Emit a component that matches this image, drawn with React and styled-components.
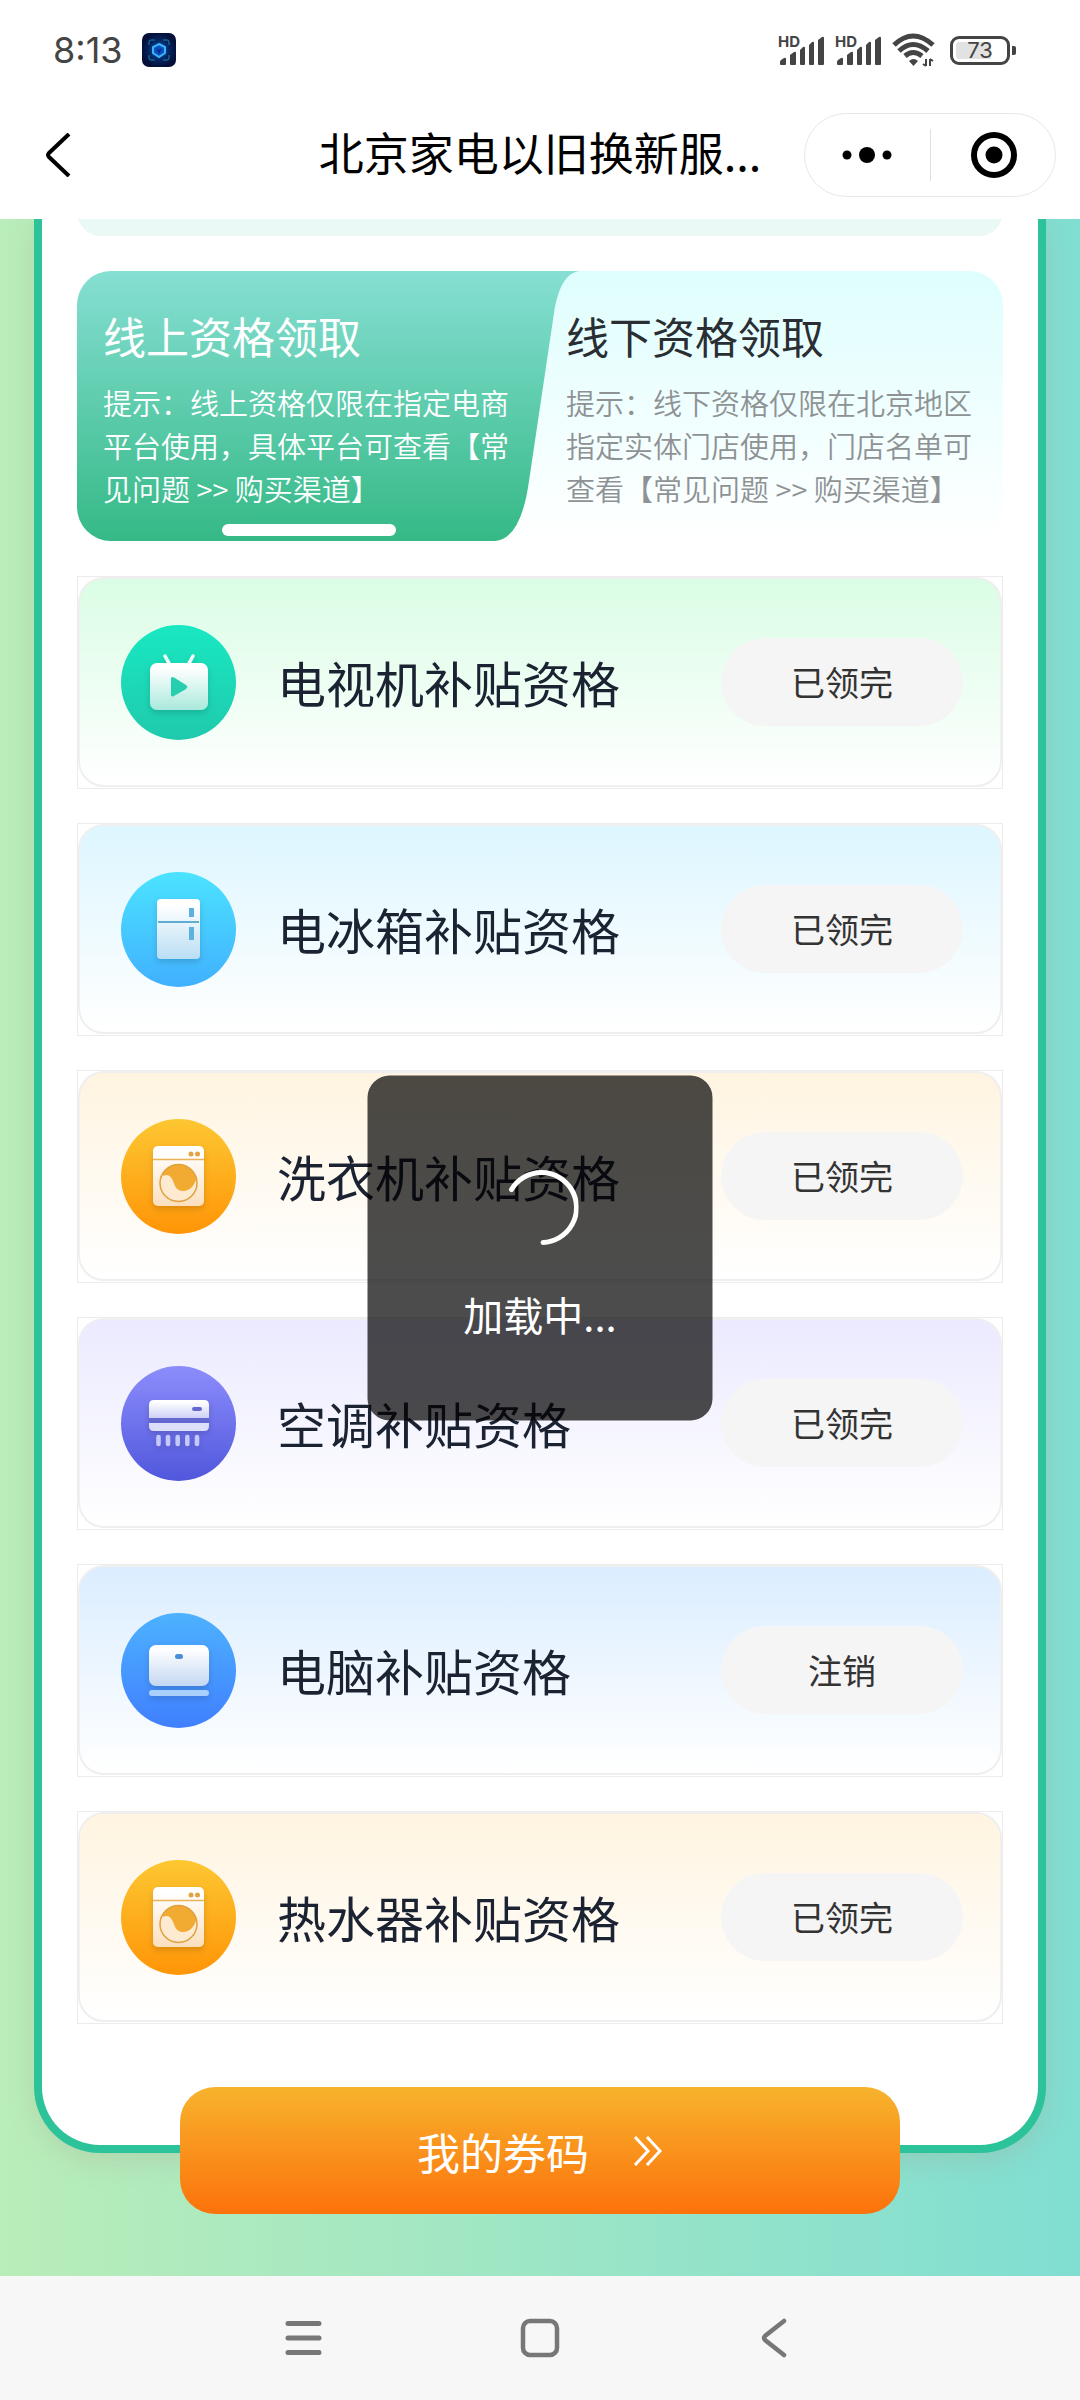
import React from 'react'
import styled, { createGlobalStyle } from 'styled-components'

const GlobalStyle = createGlobalStyle`
* {
  box-sizing: border-box;
}
body {
  margin: 0;
  background-color: #fff;
  font-family: "Noto Sans CJK SC", "Noto Sans", sans-serif;
}
button {
  font-family: inherit;
  border: none;
  padding: 0;
  background: none;
  cursor: pointer;
}
svg {
  display: block;
}
`

const Page = styled.div`
min-height: 100vh;
display: flex;
flex-direction: column;
`

const StatusBar = styled.div`
height: 90px;
padding: 10px 64px 0 53px;
display: flex;
align-items: center;
justify-content: space-between;
color: #444;
`

const StatusGroup = styled.div`
display: flex;
align-items: center;
gap: ${props => props.$gap}px;
`

const Clock = styled.span`
font-family: Inter, sans-serif;
font-size: 36px;
line-height: 40px;
`

const Battery = styled.div`
display: flex;
align-items: center;
gap: 2px;
margin-left: 4px;
`

const BatteryBody = styled.div`
width: 60px;
height: 29px;
border: 3px solid #444;
border-radius: 9px;
padding: 3px;
`

const BatteryLevel = styled.div`
height: 100%;
border-radius: 3px;
background: linear-gradient(to right, #e2e2e2 ${props => props.$level}%, transparent ${props => props.$level}%);
display: flex;
align-items: center;
justify-content: center;
font-family: Inter, sans-serif;
font-size: 22px;
line-height: 22px;
`

const BatteryTip = styled.div`
width: 4px;
height: 9px;
border-radius: 0 2px 2px 0;
background-color: #444;
`

const Header = styled.header`
height: 129px;
padding: 0 24px;
display: grid;
grid-template-columns: 1fr auto 1fr;
align-items: center;
`

const Title = styled.h1`
margin: 0 0 5px;
font-size: 45px;
line-height: 64px;
font-weight: 400;
color: #000;
white-space: nowrap;
`

const BackButton = styled.button`
width: 72px;
height: 64px;
display: flex;
align-items: center;
justify-content: center;
`

const Capsule = styled.div`
justify-self: end;
width: 252px;
height: 84px;
border: 1px solid #e8e8e8;
border-radius: 42px;
display: flex;
align-items: center;
`

const CapsuleButton = styled.button`
flex: 1;
height: 52px;
display: flex;
align-items: center;
justify-content: center;
& + & {
  border-left: 1px solid #e0e0e0;
}
`

const Main = styled.main`
flex: 1;
position: relative;
overflow: hidden;
padding: 0 34px 62px;
background: linear-gradient(to right, #b9edb9, #80ded2);
`

const Panel = styled.section`
background-color: #fff;
border: 8px solid #2cc39b;
border-top: none;
border-radius: 0 0 66px 66px;
box-shadow: 0 8px 26px rgba(170, 150, 130, 0.25);
padding: 0 35px 121px;
display: flex;
flex-direction: column;
gap: 35px;
`

// only the lower edge of the notice is in view, the rest is scrolled off
const Notice = styled.div`
height: 57px;
margin-top: -40px;
border-radius: 24px;
background-color: #eaf9f6;
`

const Tabs = styled.div`
height: 270px;
display: grid;
grid-template-columns: 1fr 1fr;
border-radius: 34px;
background: linear-gradient(to bottom, #dffefe, #fff);
`

const Tab = styled.button`
position: relative;
padding: 32px 26px 5px;
display: flex;
flex-direction: column;
align-items: flex-start;
text-align: left;
color: ${props => props.$active ? '#fff' : '#2a2e33'};
`

const TabShape = styled.span`
position: absolute;
inset: 0 -41px 0 0;
display: flex;
`

const TabFill = styled.span`
flex: 1;
border-radius: 34px 0 0 34px;
background: linear-gradient(to bottom, #86dfd3, #35b986);
`

const TabName = styled.span`
position: relative;
font-size: 43px;
line-height: 64px;
`

const TabHint = styled.span`
position: relative;
margin-top: 14px;
font-size: 29px;
line-height: 43px;
font-weight: 350;
color: ${props => props.$active ? '#fff' : '#8f9294'};
`

const TabBar = styled.span`
position: relative;
align-self: center;
width: 174px;
height: 12px;
margin-top: auto;
border-radius: 6px;
background-color: #fff;
`

const List = styled.ul`
margin: 0;
padding: 0;
list-style: none;
display: flex;
flex-direction: column;
gap: 34px;
`

const Item = styled.li`
height: 213px;
border: 1px solid #ececec;
padding-bottom: 1px;
`

const ItemInner = styled.div`
height: 100%;
border: 2px solid #efefef;
border-radius: 26px;
background: linear-gradient(to bottom, ${props => props.$color}, #fff);
padding: 0 37px 0 41px;
display: flex;
align-items: center;
`

const ItemName = styled.h2`
flex: 1;
margin: 0 0 0 41px;
font-size: 49px;
line-height: 72px;
font-weight: 400;
color: #1b2333;
`

const ItemButton = styled.button`
width: 242px;
height: 88px;
border-radius: 44px;
background-color: #f5f5f5;
color: #333;
font-size: 34px;
line-height: 48px;
`

const CouponButton = styled.button`
position: relative;
width: calc(100% - 292px);
height: 127px;
margin: -66px auto 0;
border-radius: 35px;
background: linear-gradient(to bottom, #f7b32d, #fc720b);
color: #fff;
font-size: 43px;
line-height: 64px;
display: flex;
align-items: center;
justify-content: center;
gap: 44px;
`

const Toast = styled.div`
position: absolute;
top: 50%;
left: 50%;
transform: translate(-50%, -50%);
width: 345px;
height: 345px;
border-radius: 22px;
background-color: rgba(0, 0, 0, 0.7);
color: #fff;
font-size: 40px;
line-height: 60px;
display: flex;
flex-direction: column;
align-items: center;
justify-content: center;
gap: 38px;
padding-top: 18px;
`

const NavBar = styled.nav`
height: 124px;
background-color: #f7f7f7;
display: flex;
align-items: center;
justify-content: center;
gap: 196px;
`

const NavButton = styled.button`
width: 40px;
height: 40px;
`

const AppBadge = () => (
  <svg width="34" height="34" viewBox="0 0 34 34">
    <defs>
      <radialGradient id="badge">
        <stop offset="0" stopColor="#0b5fc4" />
        <stop offset="0.6" stopColor="#04245f" />
        <stop offset="1" stopColor="#03103a" />
      </radialGradient>
    </defs>
    <rect width="34" height="34" rx="7" fill="url(#badge)" />
    <path d="M7 12V9q0-2 2-2h4M21 7h4q2 0 2 2v3M27 22v3q0 2-2 2h-4M13 27H9q-2 0-2-2v-3" fill="none" stroke="#1b7fa8" strokeWidth="1" />
    <path d="M17 11l6 3v6l-6 4-6-4v-6z" fill="#0a4fc0" stroke="#3fb4f5" strokeWidth="2" />
    <path d="M14 15l3 2 3-2-3 6z" fill="#062a80" />
  </svg>
)

const Signal = () => (
  <svg width="47" height="34" viewBox="0 0 47 34" fill="#444">
    <text x="0" y="14" fontFamily="Inter, sans-serif" fontSize="15" fontWeight="700">HD</text>
    <path d="M2 31v-2q0-1 1-2l3-2q2-1 2 1v5q0 1-1 1H3q-1 0-1-1z" />
    <path d="M12 31v-9l4-3q2-1 2 1v11q0 1-1 1h-4q-1 0-1-1z" />
    <path d="M22 31V17l3-3q2-1 2 1v16q0 1-1 1h-3q-1 0-1-1z" />
    <path d="M31 31V12l3-3q2-1 2 1v21q0 1-1 1h-3q-1 0-1-1z" />
    <path d="M40 31V7l4-3q2-1 2 1v26q0 1-1 1h-4q-1 0-1-1z" />
  </svg>
)

const Wifi = () => (
  <svg width="44" height="34" viewBox="0 0 44 34" fill="none" stroke="#444">
    <path d="M2 12Q21-6 41 12" strokeWidth="5" />
    <path d="M7 18Q21 5 36 18" strokeWidth="5" />
    <path d="M13 23Q21 16 30 23" strokeWidth="5" />
    <path d="M17 28q4.500-4 9 0l-4.500 5z" fill="#444" stroke="none" />
    <path d="M34 26v7M31 31l3 2M38 33v-7M41 28l-3-2" strokeWidth="2" />
  </svg>
)

const ICON_COLORS = {
  tv: ['#19e8c2', '#1fcaac', '#a9e9dc'],
  fridge: ['#4be3ff', '#41b0ff', '#b9def3'],
  washer: ['#fdc732', '#ff9507', '#fbdfbd'],
  ac: ['#8c8dfc', '#5057dc', '#cdd0f5'],
  pc: ['#4db2ff', '#407fff', '#c3d7f3'],
}

const shapes = {
  tv: fill => (
    <>
      <path d="M44 31l5 9M72 31l-5 9" stroke="#f2fffc" strokeWidth="3.500" strokeLinecap="round" />
      <rect x="29" y="38" width="58" height="47" rx="7" fill={fill} />
      <path d="M50 54q0-3 3-1.500l12 7.500q2.500 2 0 4l-12 7q-3 1.500-3-1.500z" fill="#25cdae" />
    </>
  ),
  fridge: fill => (
    <>
      <rect x="36" y="27" width="43" height="60" rx="4" fill={fill} />
      <path d="M37 50h41" stroke="#5fadd0" strokeWidth="2" />
      <path d="M68 36h5v9h-5zM68 55h5v13h-5z" fill="#5fb1dd" />
    </>
  ),
  washer: fill => (
    <>
      <rect x="32" y="27" width="51" height="60" rx="5" fill={fill} />
      <path d="M32 40.500h51" stroke="#eab457" strokeWidth="1.500" />
      <circle cx="70" cy="35" r="2.500" fill="#dfa544" />
      <circle cx="76.500" cy="35" r="2.500" fill="#dfa544" />
      <circle cx="57.500" cy="64" r="18.500" fill="#fdead1" />
      <path d="M42 54A18.500 18.500 0 0 1 75.500 59.500C73 67 69 72 62 72 54 72 54 65 51 60 49 56.500 46 55 42 57z" fill="#f1ab30" />
      <circle cx="57.500" cy="64" r="18.500" fill="none" stroke="#dfa03c" strokeWidth="1.500" />
    </>
  ),
  ac: fill => (
    <>
      <path d="M28 39q0-5 5-5h50q5 0 5 5v13H28z" fill={fill} />
      <path d="M28 52h60v5H28z" fill="#6468cf" />
      <path d="M28 57h60v3q0 5-5 5H33q-5 0-5-5z" fill="#dcdff9" />
      <rect x="71" y="41" width="10" height="4" rx="2" fill="#6468cf" />
      <path d="M37.500 71v7M47 71v7M56.700 71v7M66.300 71v7M76 71v7" stroke="#c5c9fa" strokeWidth="4.500" strokeLinecap="round" />
    </>
  ),
  pc: fill => (
    <>
      <rect x="28" y="32" width="60" height="41" rx="7" fill={fill} />
      <rect x="54" y="41" width="8" height="5" rx="2.500" fill="#4a8fd6" />
      <rect x="28" y="77" width="60" height="6" rx="3" fill="#a9cffc" />
    </>
  ),
}

const DeviceIcon = ({ type, id }) => {
  const [top, bottom, shade] = ICON_COLORS[type]
  return (
    <svg width="115" height="115" viewBox="0 0 115 115" fill="none" aria-hidden="true">
      <defs>
        <linearGradient id={`bg-${id}`} x1="0" y1="0" x2="0" y2="1">
          <stop offset="0" stopColor={top} />
          <stop offset="1" stopColor={bottom} />
        </linearGradient>
        <linearGradient id={`body-${id}`} x1="0" y1="0" x2="0" y2="1">
          <stop offset="0.100" stopColor="#fff" />
          <stop offset="1" stopColor={shade} />
        </linearGradient>
        <filter id={`shadow-${id}`} x="-20%" y="-20%" width="140%" height="150%">
          <feDropShadow dx="0" dy="3" stdDeviation="3" floodColor="#000" floodOpacity="0.150" />
        </filter>
      </defs>
      <circle cx="57.500" cy="57.500" r="57.500" fill={`url(#bg-${id})`} />
      <g filter={`url(#shadow-${id})`}>{shapes[type](`url(#body-${id})`)}</g>
    </svg>
  )
}

const TabEdge = () => (
  <svg width="86" height="100%" viewBox="0 0 86 270" preserveAspectRatio="none">
    <defs>
      <linearGradient id="tab-edge" x1="0" y1="0" x2="0" y2="1">
        <stop offset="0" stopColor="#86dfd3" />
        <stop offset="1" stopColor="#35b986" />
      </linearGradient>
    </defs>
    <path d="M0 0H86C70 1 63 18 59 42L34 210Q26 268 0 270z" fill="url(#tab-edge)" />
  </svg>
)

const items = [
  { name: '电视机补贴资格', icon: 'tv', color: '#dafde5', status: '已领完' },
  { name: '电冰箱补贴资格', icon: 'fridge', color: '#ddf6ff', status: '已领完' },
  { name: '洗衣机补贴资格', icon: 'washer', color: '#fff4e0', status: '已领完' },
  { name: '空调补贴资格', icon: 'ac', color: '#ebeaff', status: '已领完' },
  { name: '电脑补贴资格', icon: 'pc', color: '#dbedff', status: '注销' },
  { name: '热水器补贴资格', icon: 'washer', color: '#fff4e0', status: '已领完' },
]

const App = () => {
  return (
    <Page>
      <GlobalStyle />
      <StatusBar>
        <StatusGroup $gap={19}>
          <Clock>8:13</Clock>
          <AppBadge />
        </StatusGroup>
        <StatusGroup $gap={10}>
          <Signal />
          <Signal />
          <Wifi />
          <Battery>
            <BatteryBody>
              <BatteryLevel $level={73}>73</BatteryLevel>
            </BatteryBody>
            <BatteryTip />
          </Battery>
        </StatusGroup>
      </StatusBar>

      <Header>
        <BackButton aria-label="返回">
          <svg width="36" height="44" viewBox="0 0 36 44" fill="none" stroke="#000" strokeWidth="4">
            <path d="M27 1L7 20q-2 2 0 4l20 19" />
          </svg>
        </BackButton>
        <Title>北京家电以旧换新服...</Title>
        <Capsule>
          <CapsuleButton aria-label="更多">
            <svg width="50" height="18" viewBox="0 0 50 18">
              <circle cx="5" cy="9" r="4.500" />
              <circle cx="25" cy="9" r="8" />
              <circle cx="45" cy="9" r="4.500" />
            </svg>
          </CapsuleButton>
          <CapsuleButton aria-label="关闭">
            <svg width="48" height="48" viewBox="0 0 48 48">
              <circle cx="25" cy="24" r="20" fill="none" stroke="#000" strokeWidth="6" />
              <circle cx="25" cy="24" r="8.500" />
            </svg>
          </CapsuleButton>
        </Capsule>
      </Header>

      <Main>
        <Panel>
          <Notice />
          <Tabs>
            <Tab $active>
              <TabShape>
                <TabFill />
                <TabEdge />
              </TabShape>
              <TabName>线上资格领取</TabName>
              <TabHint $active>提示：线上资格仅限在指定电商平台使用，具体平台可查看【常见问题 &gt;&gt; 购买渠道】</TabHint>
              <TabBar />
            </Tab>
            <Tab>
              <TabName>线下资格领取</TabName>
              <TabHint>提示：线下资格仅限在北京地区指定实体门店使用，门店名单可查看【常见问题 &gt;&gt; 购买渠道】</TabHint>
            </Tab>
          </Tabs>
          <List>
            {items.map((item, index) => (
              <Item key={item.name}>
                <ItemInner $color={item.color}>
                  <DeviceIcon type={item.icon} id={index} />
                  <ItemName>{item.name}</ItemName>
                  <ItemButton>{item.status}</ItemButton>
                </ItemInner>
              </Item>
            ))}
          </List>
        </Panel>
        <CouponButton>
          我的券码
          <svg width="30" height="30" viewBox="0 0 30 30" fill="none" stroke="#fff" strokeWidth="3">
            <path d="M2 1l13 14L2 29M14 1l13 14-13 14" />
          </svg>
        </CouponButton>
        <Toast role="status">
          <svg width="76" height="76" viewBox="0 0 76 76" fill="none" stroke="#fff" strokeWidth="5" strokeLinecap="round">
            <path d="M9 20A35 35 0 1 1 40.500 73" />
          </svg>
          加载中...
        </Toast>
      </Main>

      <NavBar>
        <NavButton aria-label="菜单">
          <svg width="40" height="40" viewBox="0 0 40 40" stroke="#777" strokeWidth="5" strokeLinecap="round">
            <path d="M4 5.500h31M4 20h31M4 34.500h31" />
          </svg>
        </NavButton>
        <NavButton aria-label="主页">
          <svg width="40" height="40" viewBox="0 0 40 40" fill="none" stroke="#777" strokeWidth="4.500">
            <rect x="3" y="3" width="34" height="34" rx="7" />
          </svg>
        </NavButton>
        <NavButton aria-label="后退">
          <svg width="40" height="40" viewBox="0 0 40 40" fill="none" stroke="#777" strokeWidth="4.500" strokeLinecap="round">
            <path d="M28 3L9 18q-2 2 0 4l19 15" />
          </svg>
        </NavButton>
      </NavBar>
    </Page>
  )
}

export default App
